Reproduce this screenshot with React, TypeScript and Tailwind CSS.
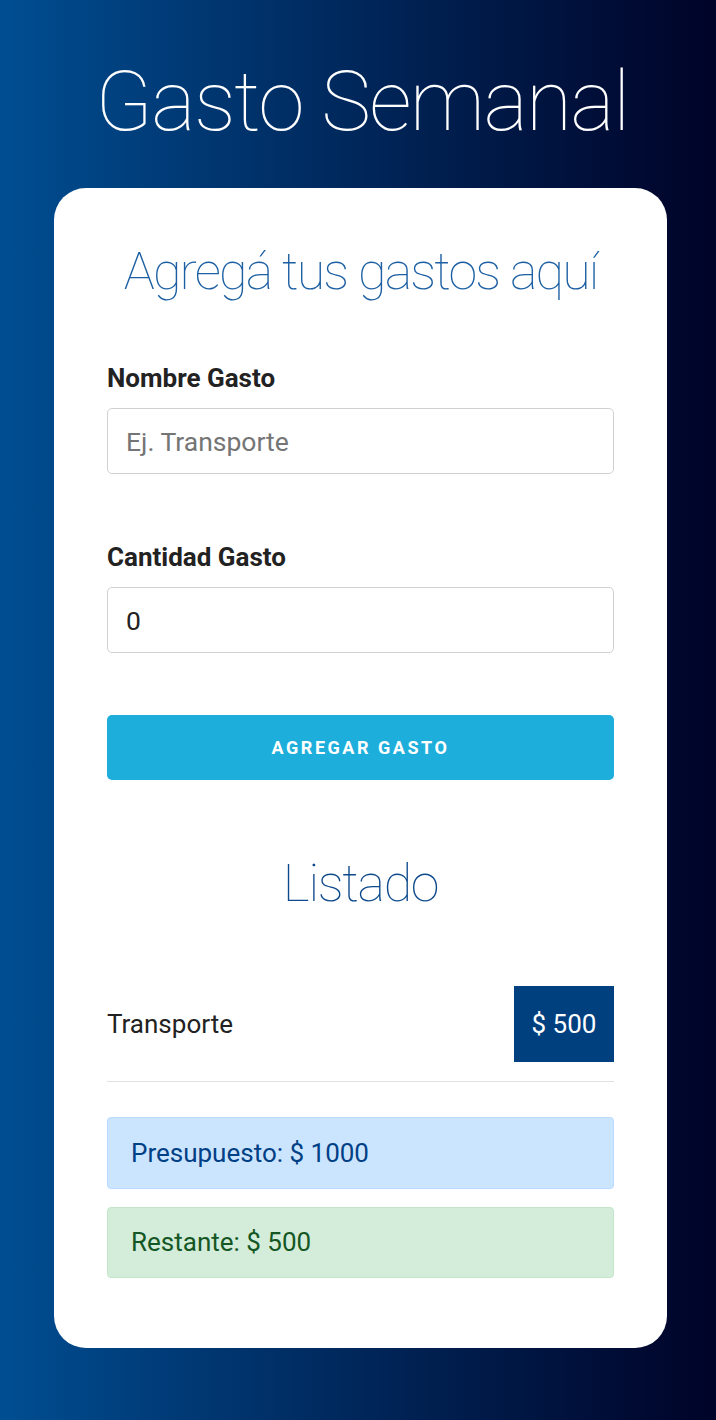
const font = { fontFamily: 'Roboto, "Noto Sans", sans-serif' };

interface FieldProps {
  label: string;
  placeholder?: string;
  value?: string;
}

function Field({ label, placeholder, value }: FieldProps) {
  return (
    <div className="flex flex-col">
      <label className="text-[26px] font-bold text-[#222] leading-none">{label}</label>
      <input
        type="text"
        readOnly
        placeholder={placeholder}
        defaultValue={value}
        className="mt-[17px] h-[66px] w-full rounded-[5px] border border-[#d1d1d1] bg-white px-[18px] text-[26.5px] text-[#222] placeholder:text-[#757575] outline-none"
        style={font}
      />
    </div>
  );
}

export default function App() {
  return (
    <div
      className="min-h-[1420px] w-full bg-gradient-to-r from-[#004e92] to-[#000428] pt-[60px] pb-[72px]"
      style={font}
    >
      <h1 className="pl-[8px] text-center text-[84px] font-thin leading-none tracking-[-0.02em] text-white">
        Gasto Semanal
      </h1>

      <div className="ml-[54px] mr-[49px] mt-[44px] rounded-[32px] bg-white px-[53px] pt-[58px] pb-[70px]">
        <h2 className="whitespace-nowrap text-center text-[52px] font-thin leading-none tracking-[-0.035em] text-[#1c5fa2]">
          Agregá tus gastos aquí
        </h2>

        <div className="mt-[67px] flex flex-col gap-[70px]">
          <Field label="Nombre Gasto" placeholder="Ej. Transporte" />
          <Field label="Cantidad Gasto" value="0" />
        </div>

        <button
          type="button"
          className="mt-[62px] flex h-[65px] w-full items-center justify-center rounded-[5px] bg-[#1eaedb] text-[18px] font-bold uppercase tracking-[0.14em] text-white"
        >
          Agregar Gasto
        </button>

        <h2 className="mt-[78px] text-center text-[52px] font-thin leading-none tracking-[-0.025em] text-[#0d4a8c]">
          Listado
        </h2>

        <ul className="mt-[76px]">
          <li className="flex items-center justify-between border-b border-[#e1e1e1] pb-[19px]">
            <span className="text-[26px] text-[#222]">Transporte</span>
            <span className="flex h-[76px] w-[100px] items-center justify-center bg-[#00407f] text-[26px] text-white">
              $ 500
            </span>
          </li>
        </ul>

        <div className="mt-[35px] flex flex-col gap-[18px]">
          <div className="flex h-[72px] items-center rounded-[4px] border border-[#b8daff] bg-[#cce5ff] px-[23px] text-[26px] text-[#004085]">
            Presupuesto: $ 1000
          </div>
          <div className="flex h-[71px] items-center rounded-[4px] border border-[#c3e6cb] bg-[#d4edda] px-[23px] text-[26px] text-[#155724]">
            Restante: $ 500
          </div>
        </div>
      </div>
    </div>
  );
}
